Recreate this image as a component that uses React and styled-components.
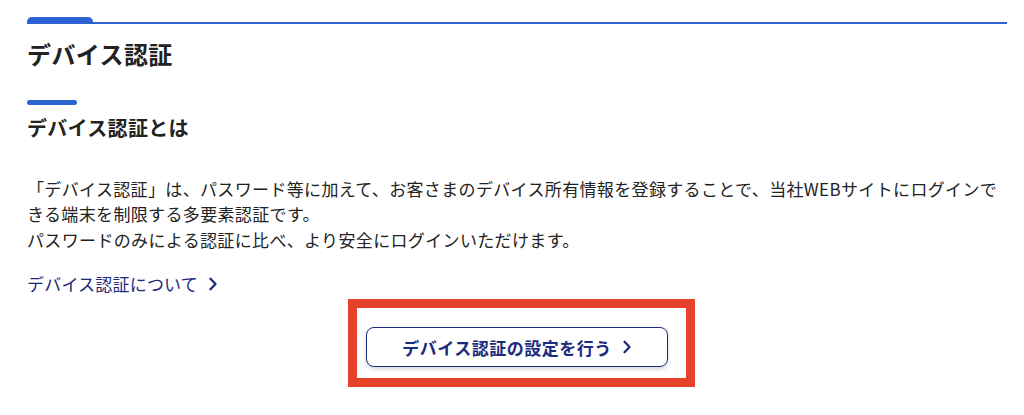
import React from "react";
import styled, { createGlobalStyle } from "styled-components";

const Colors = {
  blue: "#2d62d3",
  navy: "#1c2a7d",
  text: "#222222",
  red: "#e8412b",
};

const GlobalStyle = createGlobalStyle`
  html, body {
    margin: 0;
    padding: 0;
    background: #ffffff;
  }
  body {
    font-family: "Noto Sans CJK JP", "Noto Sans", "Liberation Sans", sans-serif;
    color: ${Colors.text};
  }
`;

const Page = styled.main`
  padding: 17px 17px 0 27px;
  height: 415px;
  box-sizing: border-box;
  overflow: hidden;
`;

const TopRule = styled.div`
  display: flex;
  align-items: flex-end;
  height: 7px;
`;

const RuleTab = styled.span`
  width: 66px;
  height: 7px;
  background: ${Colors.blue};
  border-radius: 5px 5px 0 0;
`;

const RuleLine = styled.span`
  flex: 1;
  height: 2.5px;
  background: ${Colors.blue};
`;

const PageTitle = styled.h1`
  margin: 12px 0 0;
  font-size: 24px;
  line-height: 36px;
  font-weight: 700;
  letter-spacing: 0.4px;
`;

const SubHeading = styled.div`
  margin-top: 28px;

  &::before {
    content: "";
    display: block;
    width: 50px;
    height: 4.5px;
    border-radius: 3px;
    background: ${Colors.blue};
  }

  h2 {
    margin: 8px 0 0;
    font-size: 20px;
    line-height: 30px;
    font-weight: 700;
    letter-spacing: 0.3px;
  }
`;

const Lead = styled.p`
  margin: 33px 0 0;
  font-size: 17px;
  line-height: 25.5px;
  letter-spacing: 0.35px;
  white-space: nowrap;
`;

const TextLink = styled.a`
  display: inline-flex;
  align-items: center;
  gap: 10px;
  margin-top: 19px;
  font-size: 17px;
  line-height: 25px;
  color: ${Colors.navy};
  text-decoration: none;
  letter-spacing: 0.2px;
`;

const ButtonArea = styled.div`
  display: flex;
  justify-content: center;
  margin-top: 3px;
  padding-left: 9px;
`;

const Highlight = styled.div`
  border: 9px solid ${Colors.red};
  padding: 19px 18px 11px 9px;
`;

const ActionButton = styled.button`
  display: flex;
  align-items: center;
  justify-content: center;
  gap: 10px;
  width: 302px;
  height: 40px;
  box-sizing: border-box;
  padding: 0;
  border: 1.5px solid ${Colors.navy};
  border-radius: 8px;
  background: #ffffff;
  box-shadow: 0 2px 4px rgba(0, 0, 0, 0.18);
  font-family: inherit;
  font-size: 17px;
  font-weight: 700;
  letter-spacing: 0.5px;
  color: ${Colors.navy};
  cursor: pointer;
`;

const Chevron = () => (
  <svg width="10" height="14" viewBox="0 0 10 14" fill="none" aria-hidden="true">
    <path d="M2.5 1.8 L7.5 7 L2.5 12.2" stroke={Colors.navy} strokeWidth="2.3" strokeLinecap="round" strokeLinejoin="round" />
  </svg>
);

const App = () => (
  <>
    <GlobalStyle />
    <Page>
      <TopRule>
        <RuleTab />
        <RuleLine />
      </TopRule>
      <PageTitle>デバイス認証</PageTitle>

      <SubHeading>
        <h2>デバイス認証とは</h2>
      </SubHeading>

      <Lead>
        「デバイス認証」は、パスワード等に加えて、お客さまのデバイス所有情報を登録することで、当社WEBサイトにログインで
        <br />
        きる端末を制限する多要素認証です。
        <br />
        パスワードのみによる認証に比べ、より安全にログインいただけます。
      </Lead>

      <TextLink href="#">
        デバイス認証について
        <Chevron />
      </TextLink>

      <ButtonArea>
        <Highlight>
          <ActionButton type="button">
            デバイス認証の設定を行う
            <Chevron />
          </ActionButton>
        </Highlight>
      </ButtonArea>
    </Page>
  </>
);

export default App;
